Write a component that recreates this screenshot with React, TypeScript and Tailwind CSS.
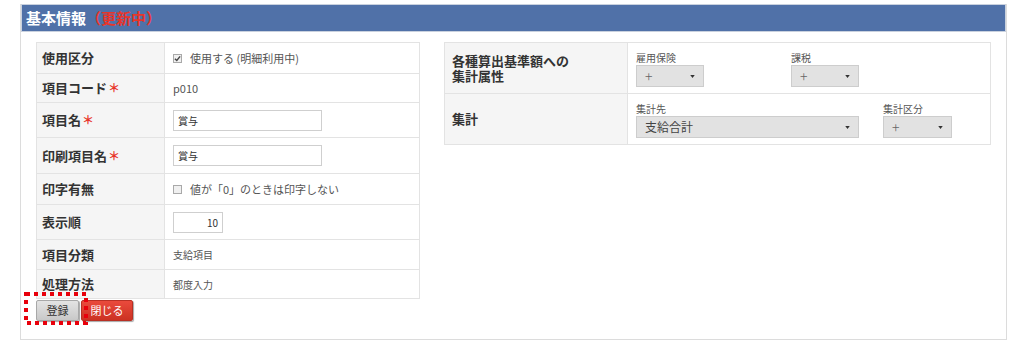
import React from 'react';

const FONT = "font-['Noto_Sans_CJK_JP','Noto_Sans',sans-serif]";

type LeftRow = { label: string; required?: boolean; h: string; value: React.ReactNode };

function Box({ checked }: { checked?: boolean }) {
  return (
    <span className="relative inline-flex h-[9px] w-[9px] shrink-0 items-center justify-center border border-[#a9a9a9] bg-[#f0f0f0]">
      {checked && (
        <svg viewBox="0 0 8 8" className="h-[7px] w-[7px]">
          <path d="M1 4.2 L3.2 6.3 L7 1.5" fill="none" stroke="#444" strokeWidth="1.6" />
        </svg>
      )}
    </span>
  );
}

function TextInput({ value, w, right }: { value: string; w: string; right?: boolean }) {
  return (
    <div className={`flex h-[21px] items-center border border-[#cfcfcf] bg-white px-[4px] text-[10px] text-[#333] ${w} ${right ? 'justify-end' : ''}`}>
      {value}
    </div>
  );
}

function Select({ value, w, big }: { value: string; w: string; big?: boolean }) {
  return (
    <div className={`flex h-[22px] items-center justify-between border border-[#cdcdcd] bg-[#e2e2e2] pl-[8px] pr-[8px] ${w}`}>
      <span className={big ? 'text-[12px] text-[#444]' : 'text-[14px] font-light leading-none text-[#666]'}>{value}</span>
      <svg viewBox="0 0 6 4" className="h-[3px] w-[5px]">
        <path d="M0 0 H6 L3 4 Z" fill="#333" />
      </svg>
    </div>
  );
}

const leftRows: LeftRow[] = [
  {
    label: '使用区分',
    h: 'h-[31px]',
    value: (
      <span className="flex items-center gap-[8px] text-[11px] text-[#555]">
        <Box checked />
        使用する (明細利用中)
      </span>
    ),
  },
  { label: '項目コード', required: true, h: 'h-[29px]', value: <span className="text-[11px] text-[#555]">p010</span> },
  { label: '項目名', required: true, h: 'h-[35px]', value: <TextInput value="賞与" w="w-[149px]" /> },
  { label: '印刷項目名', required: true, h: 'h-[36px]', value: <TextInput value="賞与" w="w-[149px]" /> },
  {
    label: '印字有無',
    h: 'h-[31px]',
    value: (
      <span className="flex items-center gap-[8px] text-[11px] text-[#555]">
        <Box />
        値が「0」のときは印字しない
      </span>
    ),
  },
  { label: '表示順', h: 'h-[35px]', value: <TextInput value="10" w="w-[50px]" right /> },
  { label: '項目分類', h: 'h-[30px]', value: <span className="text-[10px] text-[#555]">支給項目</span> },
  { label: '処理方法', h: 'h-[29px]', value: <span className="text-[10px] text-[#555]">都度入力</span> },
];

export default function App() {
  return (
    <div className={`h-[340px] w-[1024px] bg-white ${FONT}`}>
      <div className="ml-[20px] mt-[4px] flex h-[336px] w-[987px] flex-col border border-t-0 border-[#dcdcdc]">
        <div className="flex h-[28px] items-center border border-[#c9d1de] bg-[#5071a8] pl-[4px] text-[15px] font-bold">
          <span className="text-white">基本情報</span>
          <span className="text-[#e8352a]">（更新中）</span>
        </div>

        <div className="flex gap-[24px] px-[15px] pt-[10px]">
          <div className="w-[384px]">
            <div className="border-x border-t border-[#e3e3e3]">
              {leftRows.map((row) => (
                <div key={row.label} className={`flex border-b border-[#e3e3e3] ${row.h}`}>
                  <div className="flex w-[128px] shrink-0 items-center border-r border-[#e3e3e3] bg-[#f5f5f5] pl-[5px] text-[13px] font-bold text-[#333]">
                    {row.label}
                    {row.required && <span className="ml-[1px] text-[12px] text-[#e8352a]">＊</span>}
                  </div>
                  <div className="flex flex-1 items-center pl-[8px]">{row.value}</div>
                </div>
              ))}
            </div>

            <div className="relative mt-[1px] flex gap-[2px]">
              <button className="h-[21px] w-[43px] rounded-[2px] border border-[#a8a8a8] bg-gradient-to-b from-[#e4e4e4] to-[#c8c8c8] text-[11px] text-[#333] shadow-[1px_1px_1px_rgba(0,0,0,0.35)]">
                登録
              </button>
              <button className="h-[21px] w-[52px] rounded-[2px] border border-[#b83024] bg-gradient-to-b from-[#ea4a3c] to-[#cc3222] text-[11px] text-white shadow-[1px_1px_1px_rgba(0,0,0,0.35)]">
                閉じる
              </button>
              <svg className="pointer-events-none absolute left-[-12px] top-[-8px] h-[33px] w-[64px]" viewBox="0 0 64 33">
                <rect x="2" y="2" width="60" height="29" fill="none" stroke="#e8000b" strokeWidth="4" strokeDasharray="4 4" />
              </svg>
            </div>
          </div>

          <div className="flex-1">
            <div className="border-x border-t border-[#e3e3e3]">
              <div className="flex h-[51px] border-b border-[#e3e3e3]">
                <div className="flex w-[183px] shrink-0 flex-col justify-center border-r border-[#e3e3e3] bg-[#f5f5f5] pl-[7px] text-[13px] font-bold leading-[15px] text-[#333]">
                  <span>各種算出基準額への</span>
                  <span>集計属性</span>
                </div>
                <div className="flex pl-[8px] pt-[9px]">
                  <div className="w-[155px]">
                    <div className="text-[10px] leading-[12px] text-[#555]">雇用保険</div>
                    <Select value="+" w="mt-[1px] w-[68px]" />
                  </div>
                  <div>
                    <div className="text-[10px] leading-[12px] text-[#555]">課税</div>
                    <Select value="+" w="mt-[1px] w-[68px]" />
                  </div>
                </div>
              </div>
              <div className="flex h-[51px] border-b border-[#e3e3e3]">
                <div className="flex w-[183px] shrink-0 items-center border-r border-[#e3e3e3] bg-[#f5f5f5] pl-[7px] text-[13px] font-bold text-[#333]">
                  集計
                </div>
                <div className="flex pl-[8px] pt-[9px]">
                  <div className="w-[247px]">
                    <div className="text-[10px] leading-[12px] text-[#555]">集計先</div>
                    <Select value="支給合計" w="mt-[1px] w-[223px]" big />
                  </div>
                  <div>
                    <div className="text-[10px] leading-[12px] text-[#555]">集計区分</div>
                    <Select value="+" w="mt-[1px] w-[69px]" />
                  </div>
                </div>
              </div>
            </div>
          </div>
        </div>
      </div>
    </div>
  );
}
